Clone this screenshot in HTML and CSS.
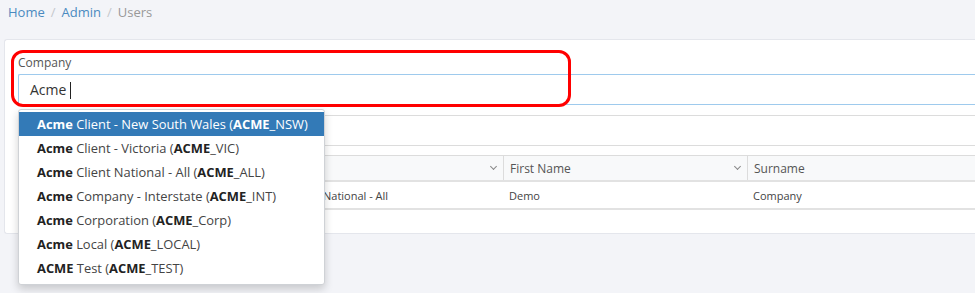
FILE: index.html
```html
<!DOCTYPE html>
<html>
<head>
<meta charset="utf-8">
<link rel="stylesheet" href="styles.css">
</head>
<body>
<nav class="breadcrumb">
  <a class="crumb-link">Home</a><span class="sep">/</span><a class="crumb-link">Admin</a><span class="sep">/</span><span class="crumb-current">Users</span>
</nav>
<section class="card">
  <div class="field">
    <div class="highlight"></div>
    <label class="field-label">Company</label>
    <div class="combo">
      <div class="input">Acme<span class="caret"></span></div>
      <ul class="menu">
        <li class="menu-item active"><b>Acme</b> Client - New South Wales (<b>ACME</b>_NSW)</li>
        <li class="menu-item"><b>Acme</b> Client - Victoria (<b>ACME</b>_VIC)</li>
        <li class="menu-item"><b>Acme</b> Client National - All (<b>ACME</b>_ALL)</li>
        <li class="menu-item"><b>Acme</b> Company - Interstate (<b>ACME</b>_INT)</li>
        <li class="menu-item"><b>Acme</b> Corporation (<b>ACME</b>_Corp)</li>
        <li class="menu-item"><b>Acme</b> Local (<b>ACME</b>_LOCAL)</li>
        <li class="menu-item"><b>ACME</b> Test (<b>ACME</b>_TEST)</li>
      </ul>
    </div>
  </div>
  <div class="toolbar"></div>
  <div class="grid">
    <div class="grid-row head">
      <div class="cell c1"><span class="chev"></span></div>
      <div class="cell c2"><span class="chev"></span></div>
      <div class="cell c3">First Name<span class="chev"></span></div>
      <div class="cell c4">Surname</div>
    </div>
    <div class="grid-row">
      <div class="cell c1"></div>
      <div class="cell c2"><span class="clip">National - All</span></div>
      <div class="cell c3">Demo</div>
      <div class="cell c4">Company</div>
    </div>
  </div>
</section>
</body>
</html>
```
FILE: styles.css
```css
html {
  background: #f3f4f8;
}
body {
  margin: 0;
  padding: 0;
  min-height: 293px;
  background: #f3f4f8;
  font-family: "Open Sans", "Noto Sans", sans-serif;
  color: #333;
}
.breadcrumb {
  display: flex;
  align-items: center;
  height: 24px;
  padding: 0 8px;
  font-size: 13px;
  line-height: 18px;
}
.crumb-link { color: #4a8ac0; }
.crumb-current { color: #999; }
.sep { color: #c4c7cc; margin: 0 6px; }

.card {
  margin: 15px 0 0 4px;
  background: #fff;
  border: 1px solid #e4e6ec;
  border-right: 0;
  border-radius: 3px 0 0 3px;
  padding: 15px 0 23px 13px;
}
.field { position: relative; }
.highlight {
  position: absolute;
  left: -7px;
  top: -5px;
  width: 554px;
  height: 51px;
  border: 3px solid #ff0000;
  border-radius: 12px;
  z-index: 3;
  pointer-events: none;
}
.field-label {
  display: block;
  font-size: 12px;
  line-height: 16px;
  color: #555;
}
.combo {
  position: relative;
  margin-top: 3px;
}
.input {
  height: 29px;
  border: 1px solid #9ecaed;
  border-right: 0;
  border-radius: 2px 0 0 2px;
  padding-left: 11px;
  padding-top: 1px;
  box-sizing: content-box;
  font-size: 14px;
  line-height: 28px;
  color: #333;
  display: flex;
  align-items: center;
}
.input { height: 28px; }
.caret {
  display: inline-block;
  width: 1px;
  height: 17px;
  background: #222;
  margin-left: 4px;
}
.menu {
  position: absolute;
  left: 0;
  top: calc(100% + 4px);
  width: 305px;
  margin: 0;
  padding: 2px 0 4px;
  list-style: none;
  background: #fff;
  border: 1px solid #cfd2d6;
  border-radius: 3px;
  box-shadow: 0 4px 8px rgba(0, 0, 0, 0.18);
  z-index: 2;
}
.menu-item {
  padding: 0 18px;
  line-height: 24px;
  font-size: 12.9px;
  color: #444;
  white-space: nowrap;
}
.menu-item b { color: #222; font-weight: 700; }
.menu-item.active {
  background: #337ab7;
  color: #fff;
}
.menu-item.active b { color: #fff; }

.toolbar {
  margin-top: 10px;
  height: 29px;
  border: 1px solid #dcdcdc;
  border-right: 0;
  border-radius: 2px 0 0 2px;
}
.grid {
  margin-top: 9px;
  border-top: 1px solid #dcdcdc;
  border-bottom: 2px solid #e2e2e2;
}
.grid-row {
  display: grid;
  grid-template-columns: 240px 245px 244px 1fr;
  height: 26px;
  font-size: 11px;
  color: #444;
}
.grid-row.head {
  background: #f8f9fa;
  border-bottom: 2px solid #e2e2e2;
  height: 24px;
  font-size: 12px;
  color: #555;
}
.cell {
  display: flex;
  align-items: center;
  padding: 0 6px;
  position: relative;
}
.clip { margin-left: 59px; }
.head .cell + .cell { border-left: 1px solid #dcdcdc; }
.chev {
  position: absolute;
  right: 7px;
  top: 8px;
  width: 4px;
  height: 4px;
  border-right: 1px solid #888;
  border-bottom: 1px solid #888;
  transform: rotate(45deg);
}
```
